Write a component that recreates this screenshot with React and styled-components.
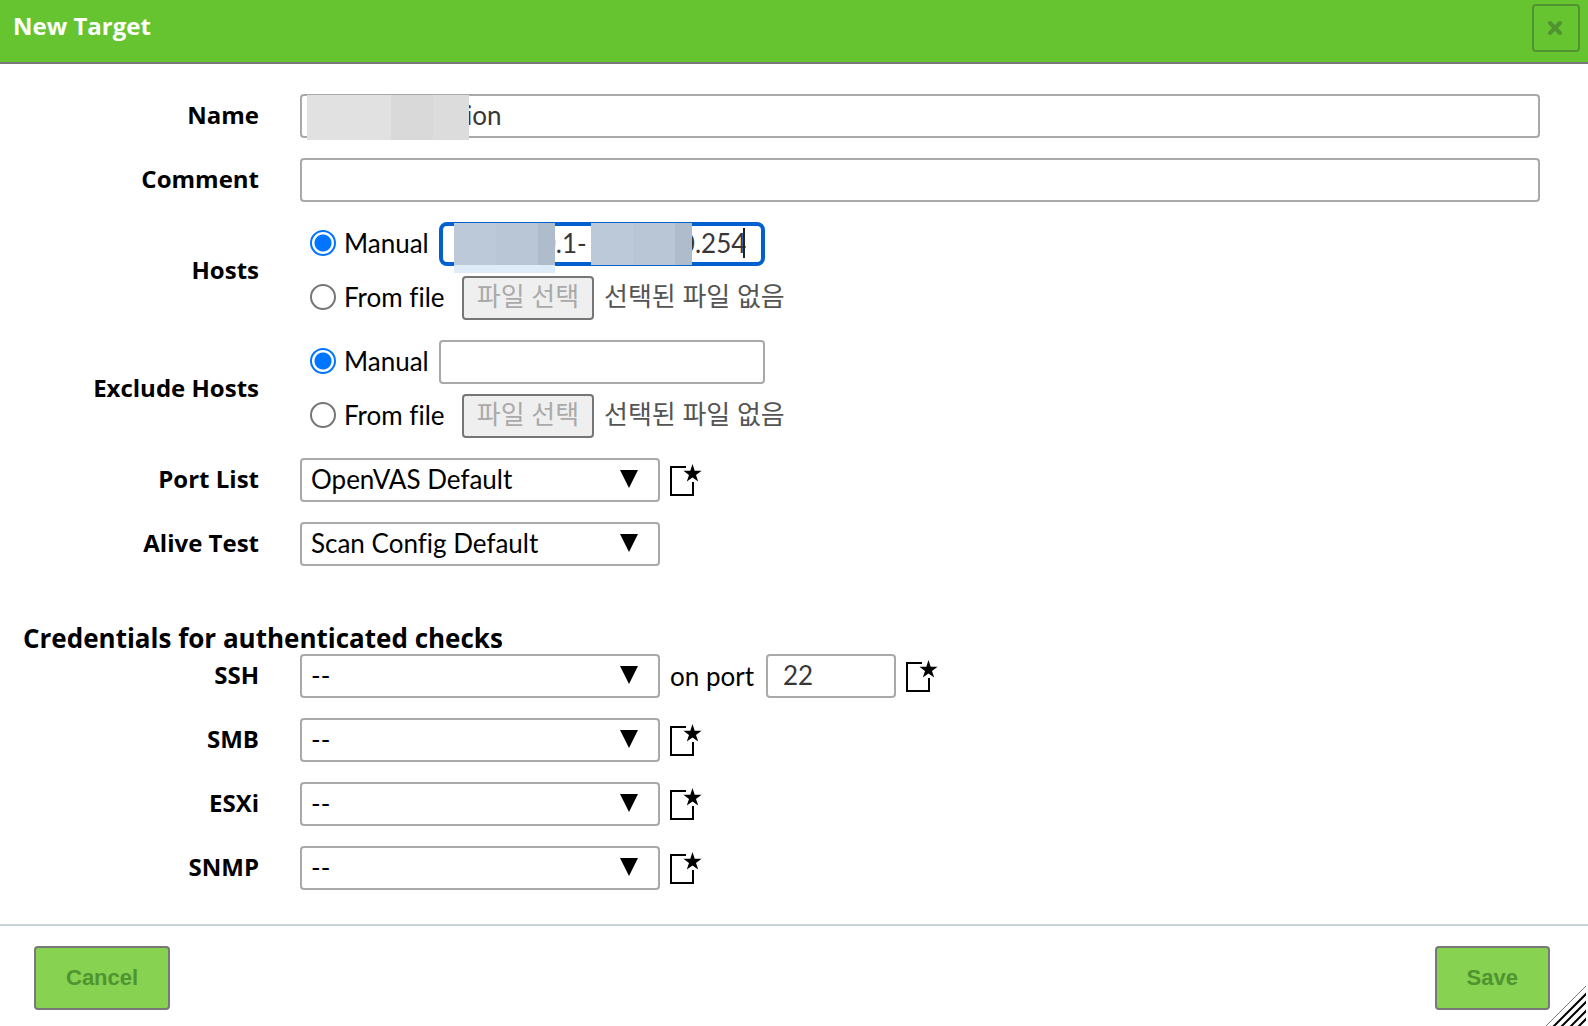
import React, { useState } from "react";
import styled, { createGlobalStyle } from "styled-components";

const GlobalStyle = createGlobalStyle`
  * {
    box-sizing: border-box;
  }
  body {
    margin: 0;
    background: #fff;
    color: #000;
    font-family: "Trebuchet MS", Lato, "Noto Sans CJK KR", sans-serif;
    font-size: 26px;
    line-height: 32px;
    font-variant-ligatures: none;
  }
  button,
  input,
  select {
    font: inherit;
    font-variant-ligatures: none;
    margin: 0;
  }
`;

const headingFont = `"Trebuchet MS", "Open Sans", sans-serif`;

const Dialog = styled.div`
  display: flex;
  flex-direction: column;
  min-height: 100vh;
`;

const Header = styled.header`
  display: flex;
  justify-content: space-between;
  align-items: flex-start;
  height: 64px;
  padding: 4px 8px 0 13px;
  background: #66c430;
  border-bottom: 2px solid #787878;
`;

const Title = styled.h1`
  margin: 0;
  padding-top: 6px;
  color: #fff;
  font-family: ${headingFont};
  font-size: 24px;
  line-height: 32px;
  font-weight: 700;
`;

const CloseButton = styled.button`
  display: flex;
  align-items: center;
  justify-content: center;
  width: 48px;
  height: 48px;
  padding: 0 2px 0 0;
  background: transparent;
  border: 2px solid #4f9430;
  border-radius: 4px;
`;

const Form = styled.form`
  display: flex;
  flex-direction: column;
  flex: 1;
`;

const Content = styled.main`
  display: flex;
  flex: 1;
  flex-direction: column;
  gap: 20px;
  padding: 30px 48px 34px 0;
`;

const Row = styled.div`
  display: grid;
  grid-template-columns: 259px 1fr;
  column-gap: 41px;
  align-items: center;
`;

const RowLabel = styled.label`
  padding-bottom: 2px;
  font-family: ${headingFont};
  font-size: 24px;
  font-weight: 700;
  text-align: right;
`;

const Stack = styled.div`
  display: flex;
  flex-direction: column;
  gap: 10px;
  padding-left: 10px;
`;

const Line = styled.div`
  display: flex;
  align-items: center;
  gap: 10px;
`;

const FieldBox = styled.div`
  position: relative;
  width: ${({ $width }) => $width || "100%"};
`;

const TextInput = styled.input`
  display: block;
  width: 100%;
  height: 44px;
  padding: 0 15px 2px ${({ $indent }) => $indent || "15px"};
  color: #393637;
  background: #fff;
  border: ${({ $active }) => ($active ? "4px solid #0060d0" : "2px solid #a9a9a9")};
  border-radius: ${({ $active }) => ($active ? "8px" : "4px")};
  outline: none;
`;

const Redaction = styled.span`
  position: absolute;
  top: 1px;
  left: ${({ $left }) => $left};
  width: ${({ $width }) => $width};
  height: ${({ $height }) => $height || "42px"};
  background: ${({ $fill }) => $fill};
  box-shadow: ${({ $shadow }) => ($shadow ? `0 ${$shadow} 0 #deebf8` : "none")};
`;

const Caret = styled.span`
  position: absolute;
  top: 6px;
  right: 20px;
  width: 2px;
  height: 30px;
  background: #222;
`;

const RadioLabel = styled.label`
  display: flex;
  align-items: center;
  gap: 8px;
  min-width: ${({ $width }) => $width};
  padding-bottom: 2px;
  white-space: nowrap;
`;

const Radio = styled.input`
  appearance: none;
  width: 26px;
  height: 26px;
  border: 2px solid #767676;
  border-radius: 50%;
  background: #fff;

  &:checked {
    border-color: #0075ff;
    background: radial-gradient(circle, #0075ff 8px, #fff 9px);
  }
`;

const FileButton = styled.button`
  height: 44px;
  width: 132px;
  padding: 0 0 4px;
  color: #aaa;
  background: #efefef;
  border: 2px solid #767676;
  border-radius: 4px;
`;

const FileStatus = styled.span`
  padding-bottom: 4px;
  color: #545454;
`;

const PortLabel = styled.label`
  padding-right: 2px;
`;

const SelectBox = styled.div`
  position: relative;
  width: 360px;

  svg {
    position: absolute;
    top: 12px;
    right: 22px;
    pointer-events: none;
  }
`;

const SelectInput = styled.select`
  appearance: none;
  display: block;
  width: 100%;
  height: 44px;
  padding: 0 50px 2px 9px;
  color: #000;
  background: #fff;
  border: 2px solid #a9a9a9;
  border-radius: 4px;
`;

const IconButton = styled.button`
  display: flex;
  padding: 0;
  background: none;
  border: 0;
`;

const SectionTitle = styled.h2`
  margin: 36px 0 -20px 23px;
  font-family: ${headingFont};
  font-size: 26px;
  line-height: 32px;
  font-weight: 700;
`;

const Footer = styled.footer`
  position: relative;
  display: flex;
  justify-content: space-between;
  padding: 20px 38px 16px 34px;
  border-top: 2px solid #c8d3d9;
`;

const ActionButton = styled.button`
  height: 64px;
  padding: 0 30px;
  color: #4f9430;
  background: #87d250;
  border: 2px solid #787878;
  border-radius: 4px;
  font-family: "Liberation Sans", Arial, sans-serif;
  font-size: 22px;
  font-weight: 700;
`;

const Grip = styled.svg`
  position: absolute;
  right: 2px;
  bottom: 0;
`;

const Select = ({ id, options }) => (
  <SelectBox>
    <SelectInput id={id}>
      {options.map((option) => (
        <option key={option}>{option}</option>
      ))}
    </SelectInput>
    <svg width="18" height="18" viewBox="0 0 18 18" aria-hidden="true">
      <path d="M0 0H18L9 18Z" />
    </svg>
  </SelectBox>
);

const NewButton = ({ label }) => (
  <IconButton type="button" aria-label={label}>
    <svg width="32" height="32" viewBox="0 0 32 32">
      <path d="M16 3H1V31H23V18" fill="none" stroke="#000" strokeWidth="2" />
      <path d="M22.5 0L24.7 6.8H31.6L26 10.9L28.2 17.5L22.5 13.4L16.8 17.5L19 10.9L13.4 6.8H20.3Z" />
    </svg>
  </IconButton>
);

const HostSource = ({ name, label, children }) => {
  const [source, setSource] = useState("manual");
  return (
    <Row role="radiogroup" aria-labelledby={`${name}-label`}>
      <RowLabel as="span" id={`${name}-label`}>
        {label}
      </RowLabel>
      <Stack>
        <Line>
          <RadioLabel $width="118px">
            <Radio
              type="radio"
              name={name}
              checked={source === "manual"}
              onChange={() => setSource("manual")}
            />
            Manual
          </RadioLabel>
          <FieldBox $width="326px">{children}</FieldBox>
        </Line>
        <Line>
          <RadioLabel $width="142px">
            <Radio
              type="radio"
              name={name}
              checked={source === "file"}
              onChange={() => setSource("file")}
            />
            From file
          </RadioLabel>
          <FileButton type="button" disabled={source !== "file"}>
            파일 선택
          </FileButton>
          <FileStatus>선택된 파일 없음</FileStatus>
        </Line>
      </Stack>
    </Row>
  );
};

const hostsFill =
  "linear-gradient(90deg, #bcc9d9 0 42px, #b8c6d6 42px 84px, #afbccc 84px)";

const App = () => {
  return (
    <>
      <GlobalStyle />
      <Dialog>
        <Header>
          <Title>New Target</Title>
          <CloseButton type="button" aria-label="Close">
            <svg width="16" height="16" viewBox="0 0 16 16">
              <path
                d="M3 3L13 13M13 3L3 13"
                stroke="#4f9430"
                strokeWidth="4"
                strokeLinecap="round"
              />
            </svg>
          </CloseButton>
        </Header>
        <Form onSubmit={(e) => e.preventDefault()}>
          <Content>
            <Row>
              <RowLabel htmlFor="name">Name</RowLabel>
              <FieldBox>
                <TextInput id="name" defaultValue="ion" $indent="164px" />
                <Redaction
                  $left="7px"
                  $width="162px"
                  $height="45px"
                  $fill="linear-gradient(90deg, #e1e1e1 0 84px, #d9d9d9 84px 126px, #dcdcdc 126px)"
                />
              </FieldBox>
            </Row>
            <Row>
              <RowLabel htmlFor="comment">Comment</RowLabel>
              <TextInput id="comment" />
            </Row>
            <HostSource name="hosts" label="Hosts">
              <TextInput
                aria-label="Hosts"
                defaultValue={`0.1-${"\u00a0".repeat(14)}0.254`}
                $indent="98px"
                $active
              />
              <Redaction $left="15px" $width="101px" $fill={hostsFill} $shadow="8px" />
              <Redaction $left="152px" $width="101px" $fill={hostsFill} />
              <Caret />
            </HostSource>
            <HostSource name="exclude" label="Exclude Hosts">
              <TextInput aria-label="Exclude Hosts" />
            </HostSource>
            <Row>
              <RowLabel htmlFor="ports">Port List</RowLabel>
              <Line>
                <Select id="ports" options={["OpenVAS Default"]} />
                <NewButton label="New port list" />
              </Line>
            </Row>
            <Row>
              <RowLabel htmlFor="alive">Alive Test</RowLabel>
              <Select id="alive" options={["Scan Config Default"]} />
            </Row>
            <SectionTitle>Credentials for authenticated checks</SectionTitle>
            <Row>
              <RowLabel htmlFor="ssh">SSH</RowLabel>
              <Line>
                <Select id="ssh" options={["--"]} />
                <PortLabel htmlFor="port">on port</PortLabel>
                <FieldBox $width="130px">
                  <TextInput id="port" defaultValue="22" />
                </FieldBox>
                <NewButton label="New SSH credential" />
              </Line>
            </Row>
            {["SMB", "ESXi", "SNMP"].map((type) => (
              <Row key={type}>
                <RowLabel htmlFor={type}>{type}</RowLabel>
                <Line>
                  <Select id={type} options={["--"]} />
                  <NewButton label={`New ${type} credential`} />
                </Line>
              </Row>
            ))}
          </Content>
          <Footer>
            <ActionButton type="button">Cancel</ActionButton>
            <ActionButton type="submit">Save</ActionButton>
            <Grip width="40" height="40" viewBox="0 0 40 40" aria-hidden="true">
              <path d="M0 40L40 0" stroke="#777" strokeWidth="1" />
              <path
                d="M7 41L41 7M15 41L41 15M24 41L41 24M32 41L41 32"
                stroke="#000"
                strokeWidth="2"
              />
            </Grip>
          </Footer>
        </Form>
      </Dialog>
    </>
  );
};

export default App;
